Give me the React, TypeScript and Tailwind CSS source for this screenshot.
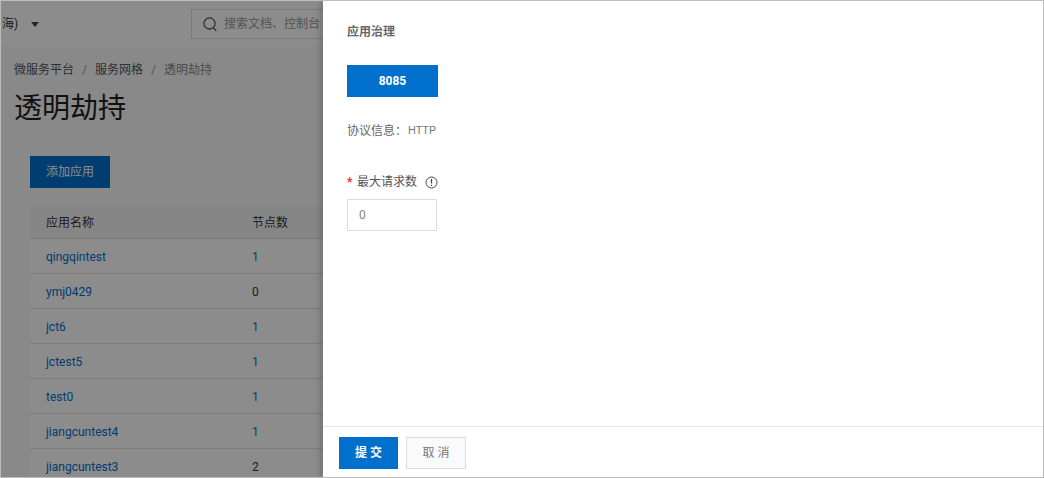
const ROWS = [
  { name: 'qingqintest', count: 1 },
  { name: 'ymj0429', count: 0 },
  { name: 'jct6', count: 1 },
  { name: 'jctest5', count: 1 },
  { name: 'test0', count: 1 },
  { name: 'jiangcuntest4', count: 1 },
  { name: 'jiangcuntest3', count: 2 },
];

const FONT = "font-['Roboto','Noto_Sans_CJK_SC',sans-serif]";

function Topbar() {
  return (
    <div className="h-[46px] flex items-center bg-white shadow-[0_1px_3px_rgba(0,0,0,0.12)] shrink-0">
      <span className="text-[12px] text-[#333] w-[17px] shrink-0 overflow-hidden whitespace-nowrap flex justify-start pl-[1px]">海)</span>
      <span className="ml-[13px] w-0 h-0 border-x-[4px] border-x-transparent border-t-[5px] border-t-[#444]" />
      <div className="ml-[152px] h-[30px] w-[400px] border border-[#dcdcdc] flex items-center pl-[11px] gap-[7px] shrink-0">
        <svg width="14" height="15" viewBox="0 0 14 15" fill="none" stroke="#444" strokeWidth="1.1">
          <circle cx="6.5" cy="6.5" r="5.6" />
          <path d="M10.6 10.8l2.6 3" />
        </svg>
        <span className="text-[12px] text-[#999]">搜索文档、控制台</span>
      </div>
    </div>
  );
}

function Content() {
  return (
    <div className="flex-1 bg-[#fafafa] pl-[13px] pt-[14px] overflow-hidden">
      <div className="flex items-center text-[12px] leading-[18px] text-[#555]">
        <span>微服务平台</span>
        <span className="mx-[8px] text-[#999]">/</span>
        <span>服务网格</span>
        <span className="mx-[8px] text-[#999]">/</span>
        <span className="text-[#888]">透明劫持</span>
      </div>
      <h1 className="mt-[10px] text-[28px] leading-[40px] font-normal text-[#222]">透明劫持</h1>
      <div className="ml-[16px] mt-[27px] w-[1000px]">
        <button className="h-[32px] w-[80px] bg-[#0070cc] text-white text-[12px]">添加应用</button>
        <div className="mt-[18px] h-[33px] pt-[1px] flex items-center bg-[#f5f5f5] border-b border-[#ddd] text-[12px] text-[#333]">
          <span className="w-[222px] pl-[16px]">应用名称</span>
          <span>节点数</span>
        </div>
        {ROWS.map(r => (
          <div key={r.name} className="h-[35px] pt-[2px] flex items-center border-b border-[#e3e3e3] bg-white text-[12px] shrink-0">
            <span className="w-[222px] pl-[16px] text-[#0070cc]">{r.name}</span>
            <span className={r.count === 1 ? 'text-[#0070cc]' : 'text-[#333]'}>{r.count}</span>
          </div>
        ))}
      </div>
    </div>
  );
}

function Drawer() {
  return (
    <div className="absolute top-0 bottom-0 right-0 w-[720px] bg-white shadow-[-3px_0_6px_rgba(0,0,0,0.18)] flex flex-col">
      <div className="flex-1 pl-[24px] pt-[22px]">
        <div className="text-[12px] leading-[18px] font-bold text-[#666]">应用治理</div>
        <div className="mt-[24px] h-[32px] w-[91px] bg-[#0070cc] text-white text-[12px] font-bold flex items-center justify-center">8085</div>
        <div className="mt-[25px] flex items-center text-[12px] leading-[18px] text-[#666]">
          <span>协议信息：</span>
          <span className="text-[#777] ml-[1px] text-[11px]">HTTP</span>
        </div>
        <div className="mt-[33px] flex items-center h-[18px] text-[12px] text-[#555]">
          <span className="text-[#f5222d] w-[10px] text-[12px] font-bold">*</span>
          <span>最大请求数</span>
          <svg className="ml-[8px]" width="13" height="13" viewBox="0 0 13 13" fill="none" stroke="#444">
            <circle cx="6.5" cy="6.5" r="5.5" />
            <path d="M6.5 3v4.4M6.5 8.7v1.3" strokeWidth="1.3" />
          </svg>
        </div>
        <div className="mt-[8px] w-[90px] h-[32px] border border-[#dcdcdc] flex items-center pl-[11px] text-[12px] text-[#888]">0</div>
      </div>
      <div className="h-[51px] border-t border-[#e8e8e8] pl-[16px] pt-[10px] flex gap-[8px] items-start shrink-0">
        <button className="h-[32px] w-[59px] pl-[3px] bg-[#0070cc] text-white text-[12px] font-bold tracking-[3px]">提交</button>
        <button className="h-[32px] w-[60px] pl-[3px] bg-[#fafafa] border border-[#dcdcdc] text-[#777] text-[12px] tracking-[3px]">取消</button>
      </div>
    </div>
  );
}

export default function App() {
  return (
    <div className={`${FONT} w-[1044px] h-[478px] border border-[#bdbdbd] relative overflow-hidden`}>
      <div className="h-full flex flex-col">
        <Topbar />
        <Content />
      </div>
      {/* mask over the page behind the drawer */}
      <div className="absolute inset-0 bg-black/[.45]" />
      <Drawer />
    </div>
  );
}
